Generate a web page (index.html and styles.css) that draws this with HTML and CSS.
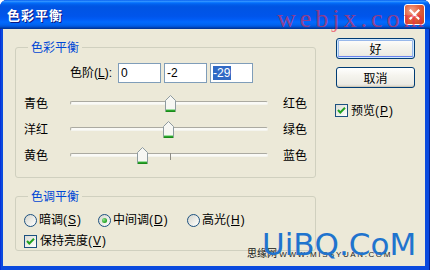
FILE: index.html
```html
<!DOCTYPE html>
<html lang="zh-CN">
<head>
<meta charset="utf-8">
<title>色彩平衡</title>
<link rel="stylesheet" href="styles.css">
</head>
<body>
<div class="window">
  <div class="titlebar">
    <span class="title">色彩平衡</span>
    <button class="close" aria-label="关闭">
      <svg width="13" height="13" viewBox="0 0 13 13"><path d="M2.5 2.5 L10.5 10.5 M10.5 2.5 L2.5 10.5" stroke="#fff" stroke-width="2.2" stroke-linecap="square"/></svg>
    </button>
    <span class="wm-webjx">webjx.com</span>
  </div>
  <div class="client">
    <div class="left">
      <div class="group g1">
        <span class="group-title">色彩平衡</span>
        <div class="levels">
          <span class="levels-label">色阶(<u>L</u>):</span>
          <div class="fields">
            <span class="field">0</span>
            <span class="field">-2</span>
            <span class="field"><span class="sel">-29</span></span>
          </div>
        </div>
        <div class="slider-row">
          <span class="lbl">青色</span>
          <div class="track"><span class="channel"></span><span class="tick"></span>
            <span class="thumb" style="left:95px"><svg width="11" height="17" viewBox="0 0 11 17"><path d="M0.5 16 V5.5 L5.5 0.5 L10.5 5.5 V16" fill="#F7F7F3" stroke="#8E9BA0"/><path d="M1 14.5 H10" stroke="#9FDC9F"/><path d="M1 15.5 H10" stroke="#2BA52B"/><path d="M0.5 16.5 H10.5" stroke="#1A8A1A"/></svg></span>
          </div>
          <span class="lbl rlbl">红色</span>
        </div>
        <div class="slider-row">
          <span class="lbl">洋红</span>
          <div class="track"><span class="channel"></span><span class="tick"></span>
            <span class="thumb" style="left:93px"><svg width="11" height="17" viewBox="0 0 11 17"><path d="M0.5 16 V5.5 L5.5 0.5 L10.5 5.5 V16" fill="#F7F7F3" stroke="#8E9BA0"/><path d="M1 14.5 H10" stroke="#9FDC9F"/><path d="M1 15.5 H10" stroke="#2BA52B"/><path d="M0.5 16.5 H10.5" stroke="#1A8A1A"/></svg></span>
          </div>
          <span class="lbl rlbl">绿色</span>
        </div>
        <div class="slider-row">
          <span class="lbl">黄色</span>
          <div class="track"><span class="channel"></span><span class="tick"></span>
            <span class="thumb" style="left:67px"><svg width="11" height="17" viewBox="0 0 11 17"><path d="M0.5 16 V5.5 L5.5 0.5 L10.5 5.5 V16" fill="#F7F7F3" stroke="#8E9BA0"/><path d="M1 14.5 H10" stroke="#9FDC9F"/><path d="M1 15.5 H10" stroke="#2BA52B"/><path d="M0.5 16.5 H10.5" stroke="#1A8A1A"/></svg></span>
          </div>
          <span class="lbl rlbl">蓝色</span>
        </div>
      </div>
      <div class="group g2">
        <span class="group-title">色调平衡</span>
        <div class="radios">
          <span class="option"><span class="radio"></span>暗调(<u>S</u>)</span>
          <span class="option"><span class="radio checked"><span class="dot"></span></span>中间调(<u>D</u>)</span>
          <span class="option"><span class="radio"></span>高光(<u>H</u>)</span>
        </div>
        <div class="option check-row">
          <span class="checkbox"><svg width="11" height="11" viewBox="0 0 11 11"><path d="M2 5 L4.3 7.5 L9 2.8" fill="none" stroke="#21A121" stroke-width="2"/></svg></span>保持亮度(<u>V</u>)
        </div>
      </div>
    </div>
    <div class="right">
      <button class="btn default">好</button>
      <button class="btn">取消</button>
      <div class="option preview">
        <span class="checkbox"><svg width="11" height="11" viewBox="0 0 11 11"><path d="M2 5 L4.3 7.5 L9 2.8" fill="none" stroke="#21A121" stroke-width="2"/></svg></span>预览(<u>P</u>)
      </div>
    </div>
  </div>
  <span class="wm-sy">思缘网 <span class="wm-url">WWW.MISSYUAN.COM</span></span>
  <span class="wm-uibq">UiBQ.CoM</span>
</div>
</body>
</html>
```
FILE: styles.css
```css
* { box-sizing: border-box; }
html, body { margin: 0; padding: 0; }
body {
  width: 430px;
  height: 270px;
  overflow: hidden;
  background: #fff;
  font-family: "Liberation Sans", "Noto Sans CJK SC", sans-serif;
  font-size: 12px;
  line-height: 14px;
  color: #000;
}
u { text-decoration: underline; text-underline-offset: 1px; }

.window {
  position: relative;
  width: 430px;
  height: 270px;
  display: flex;
  flex-direction: column;
  background: #0A4ADE;
  border-radius: 7px 7px 0 0;
  overflow: hidden;
  box-shadow: inset -1px 0 0 #00209A, inset 1px 0 0 #0831D9;
}

.titlebar {
  position: relative;
  flex: none;
  height: 29px;
  display: flex;
  align-items: center;
  padding: 0 5px 0 7px;
  background: linear-gradient(to bottom, #0058EE 0%, #3593FF 4%, #288EFF 6%, #127DFF 8%, #036FFC 10%, #0262EE 14%, #0057E5 20%, #0054E3 24%, #0055EB 56%, #005BF5 66%, #026AFE 76%, #0062EF 86%, #0052D6 92%, #0040AB 96%, #003092 100%);
}
.title {
  color: #fff;
  font-family: "Noto Sans CJK SC", sans-serif;
  font-weight: bold;
  font-size: 13px;
  letter-spacing: 1px;
  text-shadow: 1px 1px 0 #0A1883;
}
.close {
  margin-left: auto;
  width: 21px;
  height: 21px;
  padding: 0;
  border: 1px solid #fff;
  border-radius: 3px;
  background: radial-gradient(circle at 35% 30%, #F2A48C 0%, #E2603C 45%, #C8401C 100%);
  display: flex;
  align-items: center;
  justify-content: center;
}
.wm-webjx {
  position: absolute;
  left: 277px;
  top: 6px;
  font-family: "Liberation Serif", serif;
  font-size: 26px;
  line-height: 26px;
  letter-spacing: 4px;
  color: rgba(235, 45, 75, 0.62);
  white-space: nowrap;
  pointer-events: none;
}

.client {
  flex: 1;
  margin: 0 5px 4px 3px;
  background: #ECE9D8;
  display: flex;
  padding: 9px 0 0 12px;
}
.left {
  width: 301px;
  padding-top: 9px;
}
.group {
  position: relative;
  border: 1px solid #D0D0BF;
  border-radius: 3px;
}
.group-title {
  position: absolute;
  left: 12px;
  top: -8px;
  padding: 0 3px;
  background: #ECE9D8;
  color: #0046D5;
  font-family: "Noto Sans CJK SC", sans-serif;
  line-height: 14px;
}
.g1 {
  height: 131px;
  padding: 15px 0 0 8px;
}
.levels {
  display: flex;
  align-items: center;
  height: 20px;
  padding-left: 46px;
}
.levels-label { width: 48px; white-space: nowrap; }
.fields { display: flex; gap: 3px; }
.field {
  width: 43px;
  height: 20px;
  border: 1px solid #7F9DB9;
  background: #fff;
  padding: 2px 0 0 2px;
  line-height: 14px;
}
.sel {
  display: inline-block;
  background: #316AC5;
  color: #fff;
  padding: 0 1px 0 0;
}

.slider-row {
  display: grid;
  grid-template-columns: 46px 198px auto;
  align-items: center;
  height: 26px;
}
.levels + .slider-row { margin-top: 7px; }
.lbl { font-family: "Noto Sans CJK SC", sans-serif; }
.rlbl { margin-left: 15px; }
.track {
  position: relative;
  height: 26px;
  display: flex;
  align-items: center;
}
.channel {
  flex: 1;
  height: 4px;
  border: 1px solid #ABAAA1;
  border-bottom-color: #F4F4EE;
  border-right-color: #F4F4EE;
  border-radius: 2px;
  background: #FAFAF6;
}
.tick {
  position: absolute;
  left: 100px;
  top: 11px;
  width: 1px;
  height: 7px;
  background: #8E8D86;
}
.thumb {
  position: absolute;
  top: 5px;
  width: 11px;
  height: 17px;
  display: block;
}
.thumb svg { display: block; }

.g2 {
  margin-top: 18px;
  height: 55px;
  padding: 14px 0 0 8px;
}
.radios {
  display: grid;
  grid-template-columns: 74px 89px auto;
  height: 18px;
  align-items: center;
}
.option {
  display: flex;
  align-items: center;
  gap: 1px;
  white-space: nowrap;
}
.radio {
  width: 13px;
  height: 13px;
  border-radius: 50%;
  border: 1px solid #1C5180;
  background: linear-gradient(135deg, #D4D4CC 0%, #F4F4F0 70%, #fff 100%);
  display: flex;
  align-items: center;
  justify-content: center;
  margin-right: 1px;
}
.dot {
  width: 5px;
  height: 5px;
  border-radius: 50%;
  background: radial-gradient(circle at 35% 35%, #8EE28E, #21A121 70%);
}
.check-row {
  margin-top: 3px;
  height: 18px;
}
.checkbox {
  width: 13px;
  height: 13px;
  border: 1px solid #1C5180;
  background: linear-gradient(135deg, #DCDCD5 0%, #F6F6F3 75%, #fff 100%);
  display: flex;
  align-items: center;
  justify-content: center;
  margin-right: 2px;
}
.checkbox svg { display: block; }

.right {
  margin-left: 20px;
  width: 79px;
  display: flex;
  flex-direction: column;
}
.btn {
  width: 79px;
  height: 21px;
  padding: 0;
  border: 1px solid #003C74;
  border-radius: 3px;
  background: linear-gradient(to bottom, #FFFFFF 0%, #F5F4EE 40%, #ECEBE4 85%, #D8D2C6 100%);
  font-family: "Noto Sans CJK SC", sans-serif;
  font-size: 12px;
  line-height: 14px;
  color: #000;
  box-shadow: inset 0 -1px 0 #CFCAB9;
}
.btn + .btn { margin-top: 8px; }
.btn.default {
  box-shadow: inset 0 0 0 1px #CEE7FF, inset 0 -2px 0 0 #6982EE, inset 0 0 0 2px #98B8EA;
}
.preview {
  margin-top: 16px;
  margin-left: -1px;
  height: 13px;
}

.wm-sy {
  position: absolute;
  left: 247px;
  top: 247px;
  font-family: "Noto Sans CJK SC", sans-serif;
  font-size: 10px;
  line-height: 11px;
  color: #111;
  white-space: nowrap;
}
.wm-url {
  font-family: "Liberation Sans", sans-serif;
  font-size: 8px;
  letter-spacing: 1.6px;
  color: #222;
}
.wm-uibq {
  position: absolute;
  left: 262px;
  top: 229px;
  font-family: "DejaVu Sans", sans-serif;
  font-size: 31px;
  line-height: 31px;
  color: #1F74CE;
  white-space: nowrap;
}
```
